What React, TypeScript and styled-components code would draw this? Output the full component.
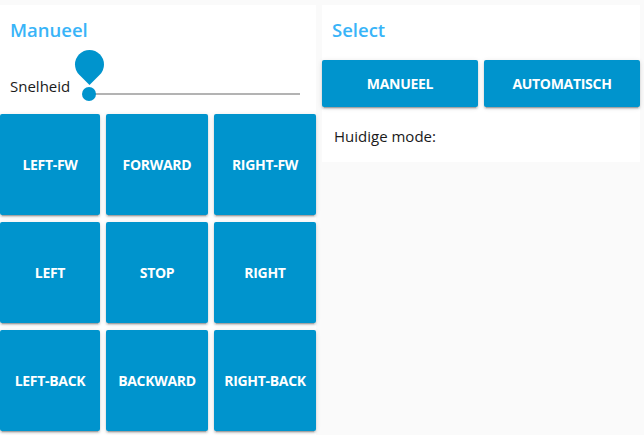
import React from "react";
import styled, { createGlobalStyle } from "styled-components";

const Global = createGlobalStyle`
  html, body { margin: 0; padding: 0; background: #fafafa; }
  body { font-family: "Open Sans", "Noto Sans", sans-serif; color: #1a1a1a; }
  * { box-sizing: border-box; }
`;

const Page = styled.div`
  display: flex;
  align-items: flex-start;
  gap: 6px;
  padding-top: 5px;
  width: 644px;
  height: 435px;
  overflow: hidden;
`;

const Card = styled.section<{ $w: number }>`
  width: ${(p) => p.$w}px;
  background: #fff;
  display: flex;
  flex-direction: column;
`;

const Title = styled.h2`
  margin: 0;
  padding: 13px 10px 0 10px;
  height: 43px;
  font-size: 18.5px;
  line-height: 24px;
  font-weight: 600;
  color: #38b4f8;
`;

const SpeedRow = styled.div`
  display: flex;
  align-items: flex-end;
  height: 66px;
  padding: 0 16px 16px 10px;
`;

const Label = styled.span`
  font-size: 15px;
  line-height: 18px;
  width: 79px;
  flex: none;
  margin-bottom: 3px;
`;

const Track = styled.div`
  position: relative;
  flex: 1;
  height: 2px;
  background: #b3b3b3;
  margin-bottom: 3px;
`;

const Thumb = styled.div`
  position: absolute;
  left: -7px;
  top: -6px;
  width: 14px;
  height: 14px;
  border-radius: 50%;
  background: #0094cd;
`;

const Balloon = styled.div`
  position: absolute;
  left: -14px;
  top: -43px;
  width: 29px;
  height: 29px;
  background: #0094cd;
  border-radius: 50% 50% 50% 0;
  transform: rotate(-45deg);
`;

const Grid = styled.div`
  display: grid;
  grid-template-columns: 100px 102px 102px;
  grid-auto-rows: 101px;
  column-gap: 6px;
  row-gap: 7px;
  padding-bottom: 10px;
`;

const Btn = styled.button<{ $h?: number }>`
  border: none;
  margin: 0;
  border-radius: 2px;
  background: #0094cd;
  color: #fff;
  font-family: "Open Sans", "Noto Sans", sans-serif;
  font-weight: 700;
  font-size: 14px;
  letter-spacing: -0.3px;
  text-transform: uppercase;
  height: ${(p) => (p.$h ? `${p.$h}px` : "auto")};
  box-shadow: 0 3px 1px -2px rgba(0, 0, 0, 0.2), 0 2px 2px 0 rgba(0, 0, 0, 0.14),
    0 1px 5px 0 rgba(0, 0, 0, 0.12);
  padding: 0;
  cursor: pointer;
`;

const ModeRow = styled.div`
  display: grid;
  grid-template-columns: 1fr 1fr;
  gap: 6px;
  margin-top: 12px;
`;

const Status = styled.p`
  margin: 0;
  padding: 19px 12px 15px;
  font-size: 15px;
  line-height: 21px;
`;

const moves = [
  "LEFT-FW",
  "FORWARD",
  "RIGHT-FW",
  "LEFT",
  "STOP",
  "RIGHT",
  "LEFT-BACK",
  "BACKWARD",
  "RIGHT-BACK",
];

export default function App() {
  return (
    <>
      <Global />
      <Page>
        <Card $w={316}>
          <Title>Manueel</Title>
          <SpeedRow>
            <Label>Snelheid</Label>
            <Track>
              <Balloon />
              <Thumb />
            </Track>
          </SpeedRow>
          <Grid>
            {moves.map((m) => (
              <Btn key={m}>{m}</Btn>
            ))}
          </Grid>
        </Card>
        <Card $w={318}>
          <Title>Select</Title>
          <ModeRow>
            <Btn $h={47}>Manueel</Btn>
            <Btn $h={47}>Automatisch</Btn>
          </ModeRow>
          <Status>Huidige mode:</Status>
        </Card>
      </Page>
    </>
  );
}
